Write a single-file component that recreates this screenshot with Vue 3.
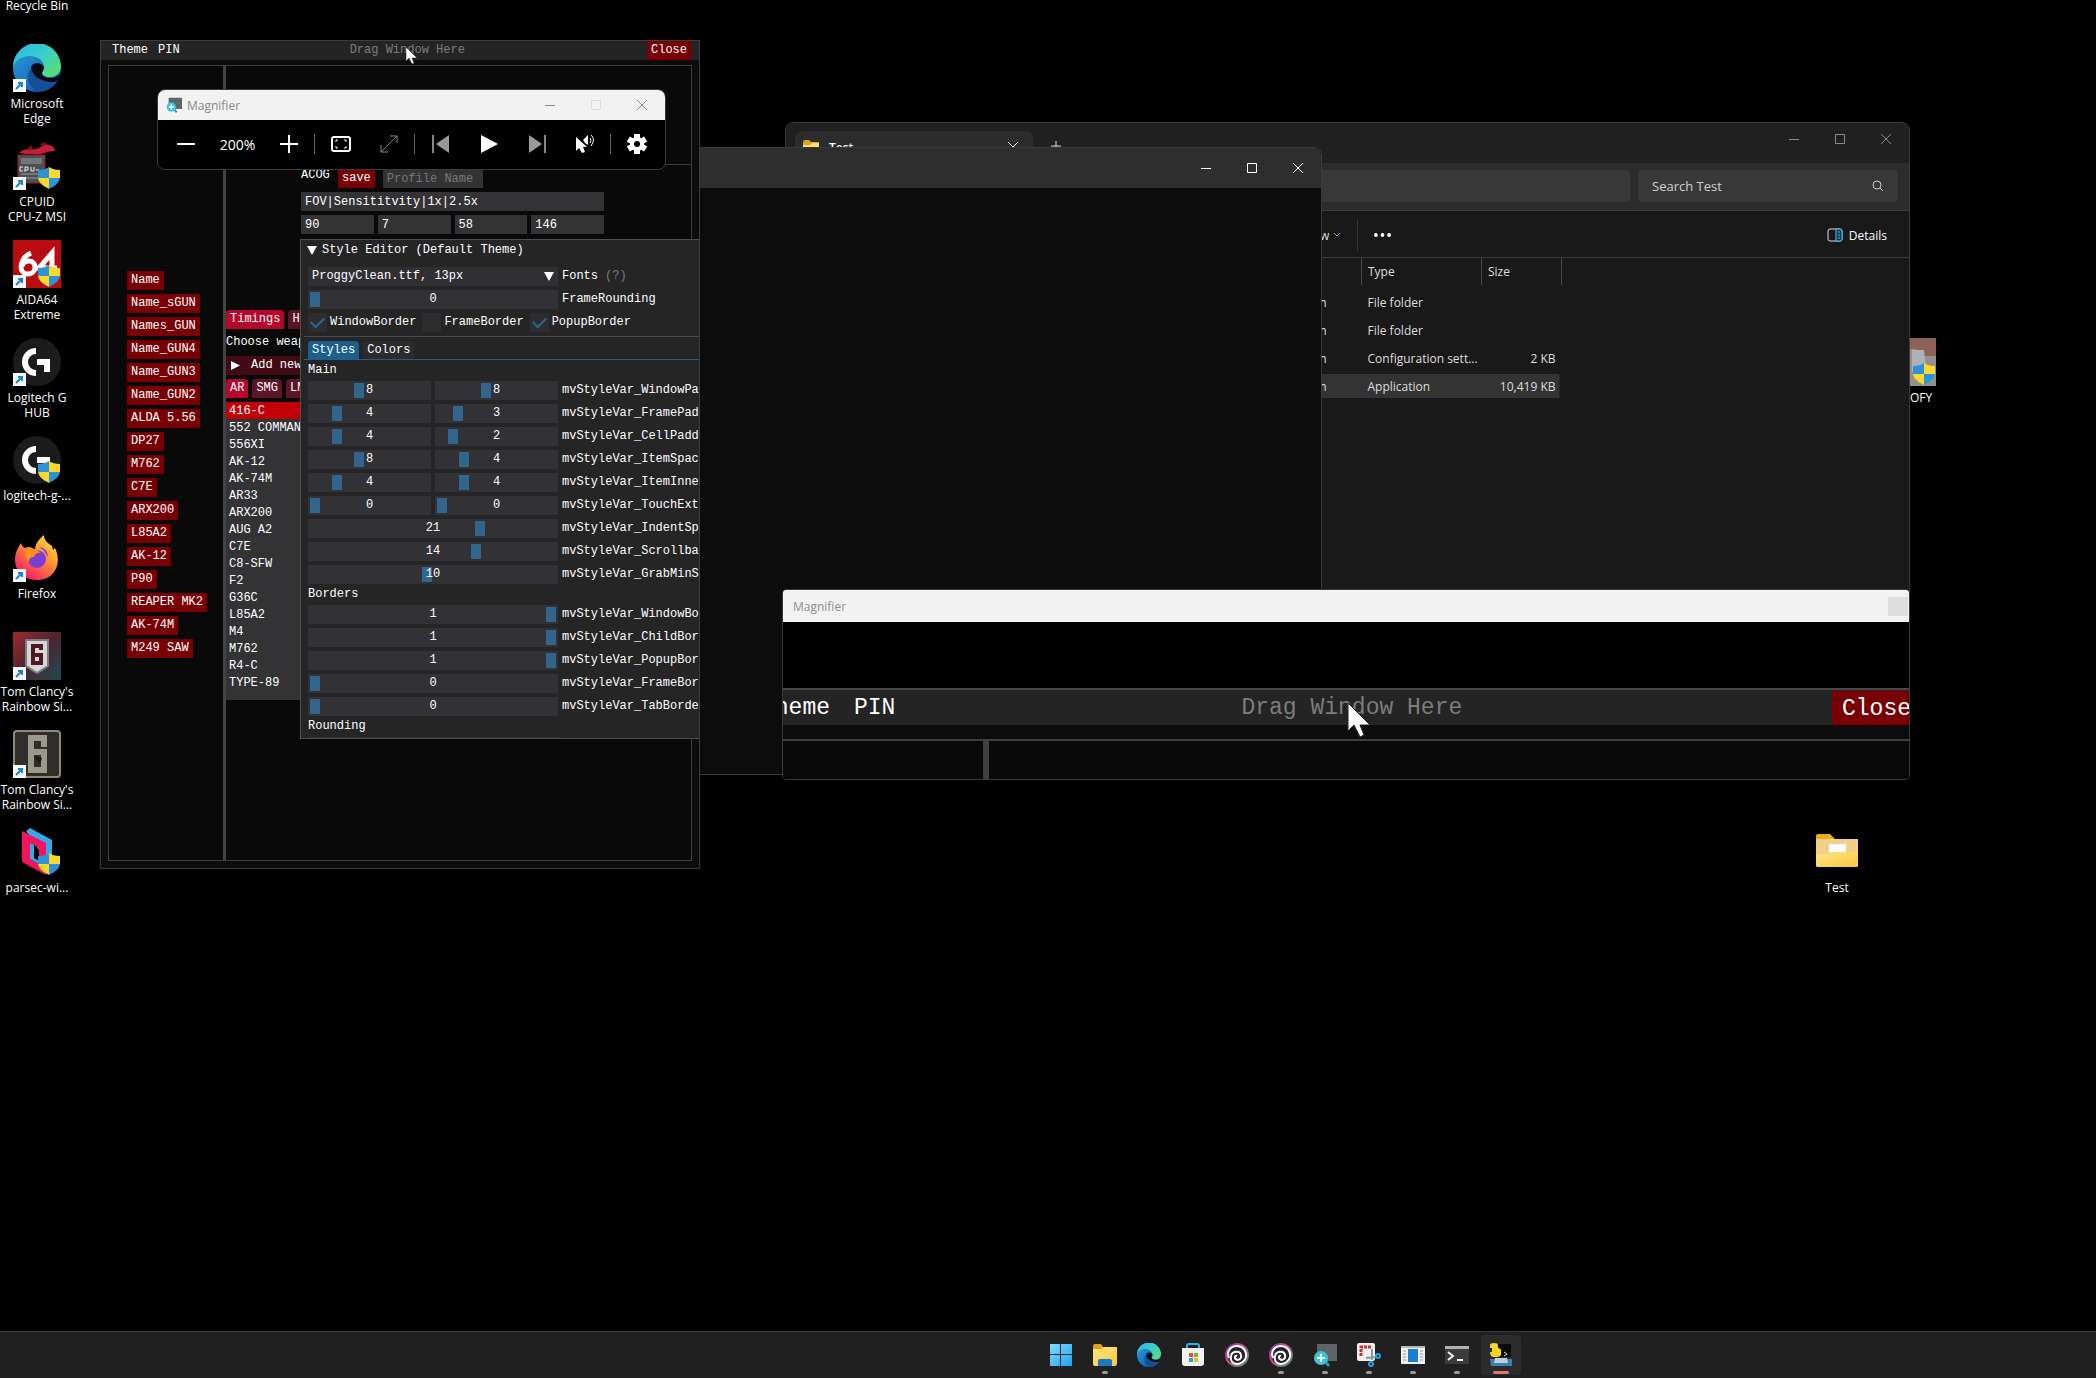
<script setup>
const shortcuts = [
  { icon: 'bin', label: 'Recycle Bin' },
  { icon: 'edge', label: 'Microsoft\nEdge', link: true },
  { icon: 'cpuz', label: 'CPUID\nCPU-Z MSI', link: true, shield: true },
  { icon: 'aida', label: 'AIDA64\nExtreme', link: true, shield: true },
  { icon: 'logi', label: 'Logitech G\nHUB', link: true },
  { icon: 'logi', label: 'logitech-g-...', shield: true },
  { icon: 'firefox', label: 'Firefox', link: true },
  { icon: 'siege', label: "Tom Clancy's\nRainbow Si...", link: true },
  { icon: 'siege-gold', label: "Tom Clancy's\nRainbow Si...", link: true },
  { icon: 'parsec', label: 'parsec-wi...', shield: true },
]

const presets = [
  'Name', 'Name_sGUN', 'Names_GUN', 'Name_GUN4', 'Name_GUN3', 'Name_GUN2', 'ALDA 5.56', 'DP27', 'M762',
  'C7E', 'ARX200', 'L85A2', 'AK-12', 'P90', 'REAPER MK2', 'AK-74M', 'M249 SAW',
]

const weapons = [
  '416-C', '552 COMMANDO', '556XI', 'AK-12', 'AK-74M', 'AR33', 'ARX200', 'AUG A2', 'C7E',
  'C8-SFW', 'F2', 'G36C', 'L85A2', 'M4', 'M762', 'R4-C', 'TYPE-89',
]

const profile = [
  { name: 'FOV', value: '90' },
  { name: 'Sensitivity', value: '7' },
  { name: '1x', value: '58' },
  { name: '2.5x', value: '146' },
]

const styleGroups = [
  {
    title: 'Main',
    rows: [
      { label: 'mvStyleVar_WindowPadding', min: 0, max: 20, values: [8, 8] },
      { label: 'mvStyleVar_FramePadding', min: 0, max: 20, values: [4, 3] },
      { label: 'mvStyleVar_CellPadding', min: 0, max: 20, values: [4, 2] },
      { label: 'mvStyleVar_ItemSpacing', min: 0, max: 20, values: [8, 4] },
      { label: 'mvStyleVar_ItemInnerSpacing', min: 0, max: 20, values: [4, 4] },
      { label: 'mvStyleVar_TouchExtraPadding', min: 0, max: 10, values: [0, 0] },
      { label: 'mvStyleVar_IndentSpacing', min: 0, max: 30, values: [21] },
      { label: 'mvStyleVar_ScrollbarSize', min: 1, max: 20, values: [14] },
      { label: 'mvStyleVar_GrabMinSize', min: 1, max: 20, values: [10] },
    ],
  },
  {
    title: 'Borders',
    rows: [
      { label: 'mvStyleVar_WindowBorderSize', min: 0, max: 1, values: [1] },
      { label: 'mvStyleVar_ChildBorderSize', min: 0, max: 1, values: [1] },
      { label: 'mvStyleVar_PopupBorderSize', min: 0, max: 1, values: [1] },
      { label: 'mvStyleVar_FrameBorderSize', min: 0, max: 1, values: [0] },
      { label: 'mvStyleVar_TabBorderSize', min: 0, max: 1, values: [0] },
    ],
  },
]

const flags = [
  { label: 'WindowBorder', on: true },
  { label: 'FrameBorder', on: false },
  { label: 'PopupBorder', on: true },
]

const files = [
  { type: 'File folder', size: '' },
  { type: 'File folder', size: '' },
  { type: 'Configuration sett...', size: '2 KB' },
  { type: 'Application', size: '10,419 KB', selected: true },
]

const tasks = [
  { icon: 'start', name: 'Start' },
  { icon: 'explorer', name: 'File Explorer', open: true },
  { icon: 'edge', name: 'Edge' },
  { icon: 'store', name: 'Store' },
  { icon: 'ubisoft', name: 'Ubisoft Connect' },
  { icon: 'ubisoft', name: 'Ubisoft Connect', open: true },
  { icon: 'magnifier', name: 'Magnifier', open: true },
  { icon: 'snip', name: 'Snipping Tool', open: true },
  { icon: 'program', name: 'Application', open: true },
  { icon: 'terminal', name: 'Terminal', open: true },
  { icon: 'python', name: 'Python', open: true, active: true },
]
</script>

<template>
  <div class="desktop">
    <svg class="sprite" aria-hidden="true">
      <defs>
        <linearGradient id="g-edge-blue" x1="0" y1="0" x2="1" y2="1">
          <stop offset="0" stop-color="#2a9fe0" /><stop offset="1" stop-color="#0f4fa8" />
        </linearGradient>
        <linearGradient id="g-edge-top" x1="0" y1="0" x2="1" y2="1">
          <stop offset="0" stop-color="#2ab4e8" /><stop offset=".5" stop-color="#3bd0c8" /><stop offset="1" stop-color="#62e05a" />
        </linearGradient>
        <linearGradient id="g-fox" x1="1" y1="0" x2=".3" y2="1">
          <stop offset="0" stop-color="#fff04a" /><stop offset=".45" stop-color="#ff9a2e" /><stop offset="1" stop-color="#f5186c" />
        </linearGradient>
        <linearGradient id="g-folder" x1="0" y1="0" x2="1" y2="1">
          <stop offset="0" stop-color="#ffe58a" /><stop offset="1" stop-color="#f7c83c" />
        </linearGradient>
        <linearGradient id="g-start" x1="0" y1="0" x2="1" y2="1">
          <stop offset="0" stop-color="#7fdcff" /><stop offset="1" stop-color="#1fa2f0" />
        </linearGradient>
        <linearGradient id="g-siege" x1="0" y1="0" x2="1" y2="1">
          <stop offset="0" stop-color="#a02a30" /><stop offset=".5" stop-color="#4a2530" /><stop offset="1" stop-color="#1f4a52" />
        </linearGradient>
        <linearGradient id="g-ubi" x1="0" y1="0" x2="1" y2="1">
          <stop offset="0" stop-color="#6a35c8" /><stop offset=".4" stop-color="#d04a90" /><stop offset="1" stop-color="#3aa070" />
        </linearGradient>
      </defs>

      <symbol id="bin" viewBox="0 0 48 48"><path d="M10 8h28l-4 36H14z" fill="#c9d6e2" /></symbol>

      <symbol id="edge" viewBox="0 0 48 48">
        <circle cx="24" cy="24" r="24" fill="url(#g-edge-blue)" />
        <path d="M0 24A24 24 0 0 1 48 22c0 7-5 11-11 11-5 0-8-2-8-4 0-1 2-3 2-6 0-6-6-11-14-11C8 12 1 17 0 24z" fill="url(#g-edge-top)" />
        <path d="M28 28c0 5 6 9 12 9 3 0 4-1 5-1-4 8-12 12-21 12-6-4-9-9-9-15 0-7 4-11 9-13-5 5-2 15 9 18z" fill="#155096" />
        <path d="M18 24c0-5 9-8 13-1 0 3-2 5-2 6 0 3 4 5 9 5 4 0 7-2 9-4l-2 6c-2 2-5 2-8 2-10-1-17-6-19-14z" fill="#030a14" />
      </symbol>

      <symbol id="cpuz" viewBox="0 0 48 48">
        <path d="M6 11c6-6 14-2 20-5 4-3 8-5 10-3 2 0 5 2 7 6-4-1-6 1-9 1-4 2-9 3-14 2-5 0-9 0-14-1z" fill="#c41e38" />
        <path d="M27 2l6-2-2 5zM14 8l4-5 2 5z" fill="#8a1426" />
        <path d="M5 13h27v28H8l-3-4z" fill="#4d4f53" stroke="#a01a2c" />
        <path d="M8 16h21v6H8zM8 31h21v2H8zM10 35h19v2H10z" fill="#74777a" />
        <path d="M10 25h-3v4h3M12 30v-5h3v3h-3M18 25v4h3v-4M23 28h3" fill="none" stroke="#eee" stroke-width="1" />
      </symbol>

      <symbol id="aida" viewBox="0 0 48 48">
        <path d="M0 0h48v48H0z" fill="#b90c10" />
        <path d="M18 13c-7 3-10 9-10 14 0 4 3 7 7 7s7-3 7-7-3-6-6-6-6 2-7 5M39 36V13L26 28h18" fill="none" stroke="#fff" stroke-width="5" />
      </symbol>

      <symbol id="logi" viewBox="0 0 48 48">
        <circle cx="24" cy="24" r="24" fill="#1c1c1d" />
        <path d="M23 10v6a8 8 0 0 0 0 16v6a14 14 0 0 1 0-28zM24 21h13v13h-6v-7h-7z" fill="#fff" />
      </symbol>

      <symbol id="firefox" viewBox="0 0 48 48">
        <path d="M2 26C2 18 5 14 8 9c1 3 2 4 4 5 4-2 7-1 10 2 0-6 4-11 9-15 0 6 4 8 8 11l1 4 2-2c7 14 1 32-18 32C11 46 2 37 2 26z" fill="url(#g-fox)" />
        <circle cx="24" cy="25" r="9" fill="#7a3fd0" />
        <path d="M13 16c7-3 12 0 15 3-4-1-6 1-7 4-4 0-5 2-5 5-4-4-5-8-3-12z" fill="#ff9020" />
        <path d="M26 13c7 1 9 5 9 10l-5-7z" fill="#a13ad8" />
      </symbol>

      <symbol id="siege" viewBox="0 0 48 48">
        <path d="M0 0h48v48H0z" fill="url(#g-siege)" />
        <path d="M13 8h22v26l-11 7-11-7z" fill="#d5d7d8" stroke="#7a7d80" stroke-width="2" />
        <path d="M28 18v-4h-8v17h8v-8h-7" fill="none" stroke="#521820" stroke-width="4" />
      </symbol>

      <symbol id="siege-gold" viewBox="0 0 48 48">
        <rect x="1" y="1" width="46" height="46" rx="3" fill="#302e2b" stroke="#908a70" stroke-width="2" />
        <path d="M31 17V8H18v32h13V22H20" fill="none" stroke="#9b998a" stroke-width="6" />
        <path d="M21 26l8 2-2 6-3-3z" fill="#1c1a16" />
      </symbol>

      <symbol id="parsec" viewBox="0 0 48 48">
        <path d="M13 3l4-3 22 12v20l-5 2z" fill="#35a8e8" />
        <path d="M9 3l24 12v32L9 34zM17 15v16l9 5V20z" fill="#f5145c" fill-rule="evenodd" />
        <path d="M17 15l4 2v13l5 3v3l-9-5z" fill="#35a8e8" />
      </symbol>

      <symbol id="goofy" viewBox="0 0 48 48">
        <path d="M0 0h48v48H0z" fill="#94908e" /><path d="M20 0h28v18H34l-6-7h-8z" fill="#8d6257" />
        <path d="M24 12h12l2 18-14 4z" fill="#aeb2b8" />
      </symbol>

      <symbol id="shield" viewBox="0 0 22 22">
        <path d="M11 0v11H0V3c5 0 8-1 11-3z" fill="#2d93d8" /><path d="M11 0v11h11V3c-5 0-8-1-11-3z" fill="#fbd92c" />
        <path d="M0 11h11v11C5 19 1 16 0 11z" fill="#fbd92c" /><path d="M22 11H11v11c6-3 10-6 11-11z" fill="#2d93d8" />
      </symbol>

      <symbol id="link" viewBox="0 0 13 13">
        <path d="M0 0h13v13H0z" fill="#f6f6f6" /><path d="M3 10l6-6M5 4h4v4" fill="none" stroke="#1a84d0" stroke-width="2" />
      </symbol>

      <symbol id="folder-full" viewBox="0 0 48 48">
        <path d="M3 8q0-2 2-2h12l5 5H3z" fill="#e4ae1e" /><path d="M3 11h42v27q0 1-2 1H5q-2 0-2-2z" fill="#f3cf88" />
        <path d="M16 16h17v8H16z" fill="#fff" />
        <path d="M3 27l12-1 3-2h27v13q0 2-2 2H5q-2 0-2-2z" fill="url(#g-folder)" />
      </symbol>

      <symbol id="folder" viewBox="0 0 16 16">
        <path d="M0 3q0-2 2-2h4l2 2h8v3H0z" fill="#d9a31d" /><path d="M0 6h7l2-2h7v9q0 1-1 1H1q-1 0-1-1z" fill="#ffdf6e" />
      </symbol>

      <symbol id="start" viewBox="0 0 24 24">
        <path d="M1 1h10v10H1zM12 1h11v10H12zM1 12h10v11H1zM12 12h11v11H12z" fill="url(#g-start)" />
      </symbol>
      <symbol id="explorer" viewBox="0 0 24 24">
        <path d="M0 3q0-2 2-2h6l2 3h14v4H0z" fill="#e0a21c" /><path d="M0 6l8 0 3-2h13v17q0 2-2 2H2q-2 0-2-2z" fill="url(#g-folder)" />
        <path d="M5 23v-5q0-2 2-2h10q2 0 2 2v5z" fill="#1b78c4" />
      </symbol>
      <symbol id="store" viewBox="0 0 24 24">
        <path d="M6 7V3q0-2 2-2h8q2 0 2 2v4" fill="none" stroke="#35aee8" stroke-width="2" />
        <path d="M1 5h22v15q0 3-3 3H4q-3 0-3-3z" fill="#f2f2f2" />
        <path d="M8 10h4v4H8z" fill="#e8502c" /><path d="M13 10h4v4h-4z" fill="#7fb52a" />
        <path d="M8 15h4v4H8z" fill="#2aa0e0" /><path d="M13 15h4v4h-4z" fill="#f5b820" />
      </symbol>
      <symbol id="ubisoft" viewBox="0 0 24 24">
        <circle cx="12" cy="12" r="12" fill="url(#g-ubi)" /><circle cx="12" cy="12" r="10" fill="#26242c" />
        <path d="M4 15C1 8 6 3 12 3c6 0 10 5 9 11-1 4-5 7-9 7-5 0-7-4-6-8 1-5 9-6 10-1 1 4-3 6-5 4-2-1-1-4 1-3" fill="none" stroke="#fff" stroke-width="2" />
      </symbol>
      <symbol id="magnifier" viewBox="0 0 24 24">
        <path d="M4 1h20v17H4z" fill="#5f6468" /><path d="M12 18l4 5" stroke="#2298b8" stroke-width="3" />
        <circle cx="8" cy="15" r="7" fill="#38c6d8" /><path d="M4 15h8M8 11v8" stroke="#fff" stroke-width="2" />
      </symbol>
      <symbol id="snip" viewBox="0 0 24 24">
        <rect x="0" y="0" width="18" height="18" rx="2" fill="#f0f0f0" />
        <path d="M4 13V4h10" fill="none" stroke="#c83028" stroke-width="3" stroke-dasharray="3 1" />
        <path d="M15 6v11M9 15l10-1" stroke="#8f9498" stroke-width="2" />
        <circle cx="21" cy="13" r="2" fill="none" stroke="#2aa0dc" stroke-width="2" /><circle cx="14" cy="21" r="2" fill="none" stroke="#2aa0dc" stroke-width="2" />
      </symbol>
      <symbol id="program" viewBox="0 0 24 24">
        <path d="M0 3h24v18H0z" fill="#f0f0f0" /><path d="M0 3h24v2H0z" fill="#b9b9b9" />
        <path d="M7 6h10v13H7z" fill="#1b7fd0" /><path d="M2 8h3M2 11h3M2 14h3M2 17h3M19 8h3M19 11h3M19 14h3M19 17h3" stroke="#9a9a9a" />
      </symbol>
      <symbol id="terminal" viewBox="0 0 24 24">
        <path d="M0 3h24v18H0z" fill="#3b3b3b" /><path d="M0 3h24v3H0z" fill="#b0b0b0" />
        <path d="M3 9l5 4-5 4M12 17h6" fill="none" stroke="#eee" stroke-width="2" />
      </symbol>
      <symbol id="python" viewBox="0 0 24 24">
        <path d="M7 1h15v13H7z" fill="#0a0a0a" /><path d="M15 9l3 2-3 2" fill="none" stroke="#ddd" />
        <path d="M1 2q0-2 4-2t4 2v3q3 0 3 3v4q-1 2-4 2H4q-3-1-3-5h2V5H1z" fill="#f5d72c" />
        <path d="M1 16h22v7H2z" fill="#3c7eb2" /><path d="M6 15h12l1 5H5z" fill="#bcd0dc" />
      </symbol>

      <symbol id="cursor" viewBox="0 0 12 18">
        <path d="M1 0v14l3-3 3 6 2-1-2-5h5z" fill="#fff" stroke="#222" stroke-width="0.5" />
      </symbol>
      <symbol id="minimize" viewBox="0 0 12 12"><path d="M1 6.5h10" stroke="currentColor" fill="none" /></symbol>
      <symbol id="maximize" viewBox="0 0 12 12"><path d="M1.5 1.5h9v9h-9z" stroke="currentColor" fill="none" /></symbol>
      <symbol id="close" viewBox="0 0 12 12"><path d="M1 1l10 10M11 1L1 11" stroke="currentColor" fill="none" /></symbol>
    </svg>

    <main class="workspace">
      <ul class="shortcuts">
        <li v-for="(s, i) in shortcuts" :key="i" class="shortcut">
          <span class="shortcut-icon">
            <svg class="art"><use :href="'#' + s.icon" /></svg>
            <svg v-if="s.link" class="link-mark"><use href="#link" /></svg>
            <svg v-if="s.shield" class="shield-mark"><use href="#shield" /></svg>
          </span>
          <span class="shortcut-label">{{ s.label }}</span>
        </li>
      </ul>

      <div class="shortcut on-right">
        <span class="shortcut-icon">
          <svg class="art"><use href="#goofy" /></svg>
          <svg class="shield-mark"><use href="#shield" /></svg>
        </span>
        <span class="shortcut-label">GOOFY</span>
      </div>
      <div class="shortcut test-folder">
        <span class="shortcut-icon"><svg class="art"><use href="#folder-full" /></svg></span>
        <span class="shortcut-label">Test</span>
      </div>

      <!-- File Explorer -->
      <section class="window explorer" aria-label="File Explorer">
        <header class="explorer-tabs">
          <div class="explorer-tab">
            <svg class="i16"><use href="#folder" /></svg>
            <span>Test</span>
            <button aria-label="Close tab"><svg class="i12"><use href="#close" /></svg></button>
          </div>
          <button class="new-tab" aria-label="New tab">
            <svg class="i12" viewBox="0 0 12 12"><path d="M6 1v10M1 6h10" stroke="#ddd" /></svg>
          </button>
          <div class="controls dim">
            <button aria-label="Minimize"><svg class="i12"><use href="#minimize" /></svg></button>
            <button aria-label="Maximize"><svg class="i12"><use href="#maximize" /></svg></button>
            <button aria-label="Close"><svg class="i12"><use href="#close" /></svg></button>
          </div>
        </header>
        <div class="explorer-nav">
          <div class="address"></div>
          <div class="search">
            <input type="text" placeholder="Search Test" aria-label="Search Test" />
            <svg class="i12" viewBox="0 0 12 12"><circle cx="5" cy="5" r="4" fill="none" stroke="#ccc" /><path d="M8 8l3 3" stroke="#ccc" /></svg>
          </div>
        </div>
        <div class="explorer-commands">
          <button class="view">View
            <svg class="chevron" viewBox="0 0 8 8"><path d="M1 2l3 3 3-3" fill="none" stroke="#aaa" /></svg>
          </button>
          <span class="bar"></span>
          <button class="more" aria-label="See more">
            <svg viewBox="0 0 18 4"><circle cx="2" cy="2" r="2" fill="#fff" /><circle cx="9" cy="2" r="2" fill="#fff" /><circle cx="16" cy="2" r="2" fill="#fff" /></svg>
          </button>
          <button class="details">
            <svg class="i16" viewBox="0 0 16 16"><rect x="1" y="2" width="14" height="12" rx="2" fill="none" stroke="#ddd" /><path d="M9 2h4q2 0 2 2v8q0 2-2 2H9z" fill="#10384e" stroke="#4cc2ff" /><path d="M11 5h2M11 8h2M11 11h2" stroke="#4cc2ff" /></svg>
            Details
          </button>
        </div>
        <table class="files">
          <thead>
            <tr><th class="date"></th><th class="type">Type</th><th class="size">Size</th></tr>
          </thead>
          <tbody>
            <tr v-for="(f, i) in files" :key="i" :class="{ selected: f.selected }">
              <td class="date">pm</td><td class="type">{{ f.type }}</td><td class="size">{{ f.size }}</td>
            </tr>
          </tbody>
        </table>
      </section>

      <!-- Console -->
      <section class="window console" aria-label="Console">
        <header>
          <div class="controls">
            <button aria-label="Minimize"><svg class="i12"><use href="#minimize" /></svg></button>
            <button aria-label="Maximize"><svg class="i12"><use href="#maximize" /></svg></button>
            <button aria-label="Close"><svg class="i12"><use href="#close" /></svg></button>
          </div>
        </header>
      </section>

      <!-- Profile tool -->
      <section class="tool" aria-label="Profiles">
        <header class="menubar">
          <button>Theme</button>
          <button>PIN</button>
          <span class="drag">Drag Window Here</span>
          <button class="red">Close</button>
        </header>
        <div class="tool-body">
          <div class="presets">
            <button v-for="p in presets" :key="p" class="red">{{ p }}</button>
          </div>
          <div class="weapons">
            <div class="tabs">
              <button class="tab on">Timings</button><button class="tab">Hotkeys</button>
            </div>
            <p>Choose weapon</p>
            <button class="adder">
              <svg viewBox="0 0 9 9"><path d="M0 0l9 4.5L0 9z" fill="#fff" /></svg>Add new weapon
            </button>
            <div class="tabs class-tabs">
              <button class="tab on">AR</button><button class="tab">SMG</button><button class="tab">LMG</button>
            </div>
            <ul>
              <li v-for="w in weapons" :key="w" :class="{ on: w === '416-C' }">{{ w }}</li>
            </ul>
          </div>
          <hr class="rule" />
          <form class="profile" @submit.prevent>
            <div class="profile-head">
              <span>ACOG</span>
              <button class="red">save</button>
              <input type="text" placeholder="Profile Name" aria-label="Profile name" />
            </div>
            <input type="text" value="FOV|Sensititvity|1x|2.5x" aria-label="Fields" />
            <div class="profile-values">
              <input v-for="f in profile" :key="f.name" type="text" :value="f.value" :aria-label="f.name" />
            </div>
          </form>
        </div>

        <div class="style-editor">
          <h2><svg viewBox="0 0 10 9"><path d="M0 0h10L5 9z" fill="#fff" /></svg>Style Editor (Default Theme)</h2>
          <div class="style-body">
            <div class="field">
              <div class="combo">
                <select id="font"><option>ProggyClean.ttf, 13px</option></select>
                <svg viewBox="0 0 10 9"><path d="M0 0h10L5 9z" fill="#fff" /></svg>
              </div>
              <label for="font">Fonts</label><span class="hint">(?)</span>
            </div>
            <div class="field">
              <div class="sliders">
                <div class="slider"><input id="rounding" type="range" min="0" max="12" :value="0" /><span>0</span></div>
              </div>
              <label for="rounding">FrameRounding</label>
            </div>
            <div class="flags">
              <label v-for="f in flags" :key="f.label"><input type="checkbox" :checked="f.on" />{{ f.label }}</label>
            </div>
            <div class="style-tabs">
              <button class="on">Styles</button><button>Colors</button>
            </div>
            <template v-for="g in styleGroups" :key="g.title">
              <h3>{{ g.title }}</h3>
              <div v-for="r in g.rows" :key="r.label" class="field">
                <div class="sliders">
                  <div v-for="(v, i) in r.values" :key="i" class="slider">
                    <input :id="r.label + i" type="range" :min="r.min" :max="r.max" :value="v" :aria-label="r.label" /><span>{{ v }}</span>
                  </div>
                </div>
                <label :for="r.label + '0'">{{ r.label }}</label>
              </div>
            </template>
            <h3>Rounding</h3>
            <div class="field">
              <div class="sliders">
                <div class="slider"><input type="range" min="0" max="12" :value="0" aria-label="Window rounding" /></div>
              </div>
            </div>
          </div>
        </div>
      </section>

      <!-- Magnifier toolbar -->
      <section class="window magnifier" aria-label="Magnifier">
        <header>
          <svg class="i16"><use href="#magnifier" /></svg>
          <span>Magnifier</span>
          <div class="controls">
            <button aria-label="Minimize"><svg class="i12"><use href="#minimize" /></svg></button>
            <button aria-label="Maximize" disabled><svg class="i12"><use href="#maximize" /></svg></button>
            <button aria-label="Close"><svg class="i12"><use href="#close" /></svg></button>
          </div>
        </header>
        <div class="mag-tools">
          <button aria-label="Zoom out"><svg viewBox="0 0 20 20"><path d="M1 10h18" stroke="#fff" stroke-width="2" /></svg></button>
          <output>200%</output>
          <button aria-label="Zoom in"><svg viewBox="0 0 20 20"><path d="M1 10h18M10 1v18" stroke="#fff" stroke-width="2" /></svg></button>
          <i></i>
          <button aria-label="Views"><svg viewBox="0 0 20 20"><rect x="1" y="3" width="18" height="14" rx="2" fill="none" stroke="#fff" stroke-width="2" /><path d="M5 8V6h2M13 6h2v2M5 12v2h2M13 14h2v-2" fill="none" stroke="#fff" stroke-width="1" /></svg></button>
          <button aria-label="Resize"><svg viewBox="0 0 20 20"><path d="M2 18L18 2M11 2h7v7M2 11v7h7" fill="none" stroke="#888" stroke-width="1" /></svg></button>
          <i></i>
          <button aria-label="Previous"><svg viewBox="0 0 20 20"><path d="M2 1v18" stroke="#888" stroke-width="2" /><path d="M18 1v18L5 10z" fill="#999" /></svg></button>
          <button aria-label="Play"><svg viewBox="0 0 20 20"><path d="M2 1l17 9-17 9z" fill="#fff" /></svg></button>
          <button aria-label="Next"><svg viewBox="0 0 20 20"><path d="M18 1v18" stroke="#888" stroke-width="2" /><path d="M2 1v18l13-9z" fill="#999" /></svg></button>
          <button aria-label="Read from here"><svg viewBox="0 0 20 20"><path d="M1 3v14l3-3 3 5 3-1-2-5h4z" fill="#fff" /><path d="M8 6l5-5v10l-3-2z" fill="#fff" /><path d="M15 4q2 2 0 5M16 1q5 4 0 11" fill="none" stroke="#fff" stroke-width="1" /></svg></button>
          <i></i>
          <button aria-label="Settings"><svg viewBox="0 0 20 20"><g fill="#fff"><path d="M7 0h6v20H7z" /><path d="M7 0h6v20H7z" transform="rotate(60 10 10)" /><path d="M7 0h6v20H7z" transform="rotate(120 10 10)" /><circle cx="10" cy="10" r="7" /></g><circle cx="10" cy="10" r="3" fill="#000" /></svg></button>
        </div>
      </section>

      <!-- Magnifier lens -->
      <section class="window lens" aria-label="Magnifier lens">
        <header><span>Magnifier</span><b></b></header>
        <div class="lens-view">
          <div class="lens-bar">
            <span>Theme</span><span>PIN</span><span class="lens-drag">Drag Window Here</span><span class="lens-close">Close</span>
          </div>
          <div class="lens-child"></div>
        </div>
      </section>

      <svg class="pointer"><use href="#cursor" /></svg>
      <svg class="pointer big"><use href="#cursor" /></svg>
    </main>

    <nav class="taskbar" aria-label="Taskbar">
      <button v-for="(t, i) in tasks" :key="i" :class="{ open: t.open, active: t.active }" :aria-label="t.name">
        <svg><use :href="'#' + t.icon" /></svg>
      </button>
    </nav>
  </div>
</template>

<style>
body {
  background: #000;
}
</style>

<style scoped>
.desktop {
  min-height: 100vh;
  display: flex;
  flex-direction: column;
  overflow: hidden;
  color: #fff;
  background: #000;
  font: 12px/15px "Open Sans", "Noto Sans", sans-serif;
}
.desktop * {
  box-sizing: border-box;
}
.sprite {
  position: absolute;
  width: 0;
  height: 0;
}
button,
input,
select {
  font: inherit;
  color: inherit;
  border: 0;
  border-radius: 0;
  margin: 0;
  padding: 0;
  background: none;
  outline: 0;
}
svg {
  display: block;
  flex: none;
}
ul {
  list-style: none;
  margin: 0;
  padding: 0;
}
.i12 {
  width: 12px;
  height: 12px;
}
.i16 {
  width: 16px;
  height: 16px;
}
.workspace {
  position: relative;
  flex: 1;
}

/* Desktop shortcuts */
.shortcuts {
  position: absolute;
  left: 0;
  top: -54px;
}
.shortcut {
  width: 74px;
  height: 98px;
  display: flex;
  flex-direction: column;
  align-items: center;
  gap: 4px;
}
.shortcut-icon {
  position: relative;
}
.art {
  width: 48px;
  height: 48px;
}
.link-mark {
  position: absolute;
  left: 0;
  bottom: 0;
  width: 13px;
  height: 13px;
}
.shield-mark {
  position: absolute;
  right: 1px;
  bottom: 1px;
  width: 22px;
  height: 22px;
}
.shortcut-label {
  text-align: center;
  white-space: pre;
}
.on-right {
  position: absolute;
  left: 1875px;
  top: 338px;
}
.test-folder {
  position: absolute;
  left: 1800px;
  top: 828px;
}

/* Windows */
.window {
  position: absolute;
  overflow: hidden;
  border: 1px solid #3a3a3a;
  border-radius: 8px;
}
.controls {
  display: flex;
  margin-left: auto;
}
.controls button {
  width: 46px;
  height: 32px;
  display: grid;
  place-items: center;
}
.dim {
  color: #8a8a8a;
}

.explorer {
  left: 785px;
  top: 122px;
  width: 1125px;
  height: 600px;
  color: #dedede;
  background: #191919;
}
.explorer-tabs {
  height: 40px;
  display: flex;
  background: #202020;
}
.explorer-tab {
  width: 238px;
  margin: 8px 0 0 9px;
  padding: 0 14px 0 8px;
  display: flex;
  align-items: center;
  gap: 10px;
  border-radius: 8px 8px 0 0;
  background: #2c2c2c;
  color: #fff;
  font-weight: 600;
}
.explorer-tab button {
  margin-left: auto;
}
.new-tab {
  width: 46px;
  padding-top: 6px;
  display: grid;
  place-items: center;
}
.explorer-nav {
  height: 48px;
  padding: 7px 11px 8px;
  display: flex;
  gap: 8px;
  background: #2c2c2c;
  border-bottom: 1px solid #3b3b3b;
}
.address {
  flex: 1;
  border-radius: 4px;
  background: #383838;
}
.search {
  width: 260px;
  padding: 0 14px;
  display: flex;
  align-items: center;
  border-radius: 4px;
  background: #383838;
}
.search input {
  flex: 1;
  min-width: 0;
  font-size: 13px;
}
.search input::placeholder {
  color: #d0d0d0;
}
.explorer-commands {
  height: 47px;
  padding: 2px 22px 0 517px;
  display: flex;
  align-items: center;
  border-bottom: 1px solid #3b3b3b;
}
.view {
  display: flex;
  align-items: center;
  gap: 4px;
}
.chevron {
  width: 8px;
  height: 8px;
}
.bar {
  width: 1px;
  height: 32px;
  margin: 0 16px;
  background: #333;
}
.more svg {
  width: 17px;
  height: 4px;
}
.details {
  margin-left: auto;
  display: flex;
  align-items: center;
  gap: 6px;
  color: #fff;
}
.files {
  width: 776px;
  table-layout: fixed;
  border-collapse: collapse;
}
.files th {
  height: 27px;
  padding: 0 6px 1px;
  text-align: left;
  font-weight: 400;
  border-right: 1px solid #4a4a4a;
}
.files thead::after {
  content: "";
  display: block;
  height: 3px;
}
.files td {
  height: 28px;
  padding: 0 6px;
  white-space: nowrap;
}
.files .type {
  width: 120px;
}
.files .size {
  width: 80px;
}
.files td.size {
  text-align: right;
}
.files td.date {
  padding-right: 35px;
  text-align: right;
}
.selected {
  background: linear-gradient(#333, #333) 0 2px / 773px 24px no-repeat;
}

.console {
  left: 560px;
  top: 147px;
  width: 762px;
  height: 628px;
  background: #0c0c0c;
}
.console header {
  height: 40px;
  padding: 4px 0;
  display: flex;
  background: #2e2e2e;
}

/* Profile tool */
.tool {
  position: absolute;
  left: 100px;
  top: 40px;
  width: 600px;
  height: 829px;
  display: flex;
  flex-direction: column;
  overflow: hidden;
  border: 1px solid #3c3c3e;
  background: #0c0c0c;
  font: 12px/13px "Liberation Mono", "DejaVu Sans Mono", monospace;
  white-space: nowrap;
}
.menubar {
  height: 19px;
  padding: 0 8px 0 11px;
  display: flex;
  align-items: center;
  gap: 10px;
  background: #242424;
}
.drag {
  margin-left: 160px;
  color: #7c7c7c;
}
.red {
  height: 19px;
  padding: 0 4px;
  background: #780004;
}
.menubar .red {
  margin-left: auto;
}
.tool-body {
  position: relative;
  flex: 1;
  margin: 5px 7px 7px;
  display: flex;
  border: 1px solid #3c3c3e;
  background: #09090a;
}
.presets {
  width: 117px;
  padding: 205px 0 0 18px;
  display: flex;
  flex-direction: column;
  align-items: flex-start;
  gap: 4px;
  border-right: 3px solid #444447;
}
.weapons {
  flex: 1;
  padding-top: 244px;
  display: flex;
  flex-direction: column;
}
.tabs {
  display: flex;
  gap: 4px;
}
.tab {
  height: 19px;
  padding: 0 4px;
  border-radius: 4px 4px 0 0;
  background: #5c1426;
}
.tab.on {
  background: #b5062c;
}
.weapons p {
  margin: 7px 0;
}
.adder {
  height: 19px;
  padding: 0 5px;
  display: flex;
  align-items: center;
  gap: 11px;
  background: #400b12;
}
.adder svg {
  width: 9px;
  height: 9px;
}
.class-tabs {
  margin: 4px 0;
}
.weapons ul {
  height: 298px;
  background: #333335;
}
.weapons li {
  height: 17px;
  padding: 3px 3px 1px;
}
.weapons li.on {
  background: #c20008;
}
.rule {
  position: absolute;
  left: 117px;
  right: 0;
  top: 98px;
  margin: 0;
  border: 0;
  border-top: 1px solid #3c3c3e;
}
.profile {
  position: absolute;
  left: 192px;
  top: 103px;
  width: 303px;
  display: flex;
  flex-direction: column;
  gap: 4px;
}
.profile-head {
  display: flex;
  gap: 8px;
}
.profile-head span {
  width: 29px;
}
.profile-head input {
  width: 100px;
  background: #252525;
}
.profile-head input::placeholder {
  color: #777;
}
.profile input {
  height: 19px;
  padding: 0 4px;
  background: #333335;
}
.profile-values {
  display: flex;
  gap: 4px;
}
.profile-values input {
  flex: 1;
  min-width: 0;
}

/* Style editor */
.style-editor {
  position: absolute;
  left: 199px;
  top: 198px;
  width: 420px;
  height: 500px;
  overflow: hidden;
  border: 1px solid #4e4e50;
  background: #252526;
}
h2,
h3 {
  margin: 0;
  font: inherit;
}
h2 {
  height: 19px;
  padding: 1px 0 0 6px;
  display: flex;
  align-items: center;
  gap: 5px;
}
h2 svg,
.combo svg {
  width: 10px;
  height: 9px;
}
.style-body {
  padding: 8px 7px 0;
  display: flex;
  flex-direction: column;
  gap: 4px;
}
.field {
  height: 19px;
  display: flex;
  align-items: center;
  gap: 4px;
}
.hint {
  margin-left: 3px;
  color: #7c7c7c;
}
.combo {
  position: relative;
  flex: none;
  width: 250px;
  height: 19px;
  background: #303034;
}
.combo select {
  width: 100%;
  height: 19px;
  padding: 0 4px;
  appearance: none;
}
.combo svg {
  position: absolute;
  right: 4px;
  top: 5px;
}
.sliders {
  flex: none;
  width: 250px;
  display: flex;
  gap: 4px;
}
.slider {
  position: relative;
  flex: 1;
  height: 19px;
}
.slider input {
  display: block;
  width: 100%;
  height: 19px;
  padding: 2px;
  appearance: none;
  background: #323236;
}
.slider input::-webkit-slider-thumb {
  appearance: none;
  width: 10px;
  height: 15px;
  background: #32658c;
}
.slider span {
  position: absolute;
  inset: 3px 0;
  text-align: center;
  pointer-events: none;
}
.flags {
  display: flex;
  gap: 6px;
}
.flags label {
  display: flex;
  align-items: center;
  gap: 3px;
}
.flags input {
  width: 19px;
  height: 19px;
  display: grid;
  place-items: center;
  appearance: none;
  background: #2d2d30;
}
.flags input:checked::before {
  content: "";
  width: 11px;
  height: 6px;
  margin-bottom: 4px;
  border: solid #286893;
  border-width: 0 0 2px 2px;
  transform: rotate(-45deg);
}
.style-tabs {
  margin: 0 -8px 0 -4px;
  padding: 4px 4px 0;
  display: flex;
  gap: 4px;
  border-top: 1px solid #4a4a4c;
  border-bottom: 1px solid #1c5f8e;
}
.style-tabs button {
  height: 18px;
  padding: 0 4px;
  border-radius: 4px 4px 0 0;
  background: #2b2b2d;
}
.style-tabs .on {
  background: #1c5f8e;
}
h3 {
  height: 13px;
}

/* Magnifier toolbar */
.magnifier {
  left: 157px;
  top: 89px;
  width: 509px;
  height: 81px;
  background: #000;
}
.magnifier header {
  height: 30px;
  padding-left: 8px;
  display: flex;
  align-items: center;
  gap: 5px;
  color: #888;
  background: #f2f2f2;
}
.magnifier .controls button:disabled {
  color: #ddd;
}
.mag-tools {
  height: 48px;
  padding: 0 4px;
  display: flex;
  align-items: center;
}
.mag-tools button {
  width: 48px;
  height: 40px;
  display: grid;
  place-items: center;
}
.mag-tools svg {
  width: 20px;
  height: 20px;
}
.mag-tools output {
  width: 55px;
  text-align: center;
  font-size: 14px;
}
.mag-tools i {
  width: 1px;
  height: 20px;
  margin: 0 2px 0 1px;
  background: #666;
}

/* Magnifier lens */
.lens {
  left: 782px;
  top: 589px;
  width: 1128px;
  height: 191px;
  border-radius: 4px;
  background: #000;
}
.lens header {
  height: 32px;
  padding: 0 1px 0 10px;
  display: flex;
  align-items: center;
  justify-content: space-between;
  color: #8f8f8f;
  background: #f2f2f2;
}
.lens b {
  width: 20px;
  height: 19px;
  background: #dedede;
}
.lens-view {
  height: 157px;
  padding-top: 66px;
  display: flex;
  flex-direction: column;
  background: #000;
  font: 23px/28px "Liberation Mono", "DejaVu Sans Mono", monospace;
  white-space: nowrap;
}
.lens-bar {
  height: 37px;
  padding-top: 1px;
  margin-left: -22px;
  display: flex;
  align-items: center;
  gap: 24px;
  border-top: 2px solid #464648;
  background: #242424;
}
.lens-drag {
  margin-left: 322px;
  color: #7c7c7c;
}
.lens-close {
  align-self: stretch;
  width: 77px;
  margin-left: auto;
  padding: 4px 10px;
  background: #780004;
}
.lens-child {
  flex: 1;
  margin-top: 14px;
  border-top: 2px solid #3e3e40;
  background: linear-gradient(#404044, #404044) 200px 0 / 6px 100% no-repeat #09090a;
  box-shadow: 0 -14px #0c0c0c;
}

.pointer {
  position: absolute;
  left: 405px;
  top: 47px;
  width: 12px;
  height: 18px;
}
.pointer.big {
  left: 1346px;
  top: 703px;
  width: 24px;
  height: 36px;
}

/* Taskbar */
.taskbar {
  height: 47px;
  padding: 3px 0 3px 1041px;
  display: flex;
  gap: 4px;
  border-top: 1px solid #3a3a3a;
  background: #202020;
}
.taskbar button {
  position: relative;
  width: 40px;
  height: 40px;
  display: grid;
  place-items: center;
  border-radius: 4px;
}
.taskbar svg {
  width: 24px;
  height: 24px;
}
.taskbar .active {
  background: #2b2b2b;
}
.taskbar .open::after {
  content: "";
  position: absolute;
  left: 17px;
  bottom: 1px;
  width: 6px;
  height: 3px;
  border-radius: 2px;
  background: #9a9a9a;
}
.taskbar .active::after {
  left: 12px;
  width: 16px;
  background: #e2766c;
}
</style>
